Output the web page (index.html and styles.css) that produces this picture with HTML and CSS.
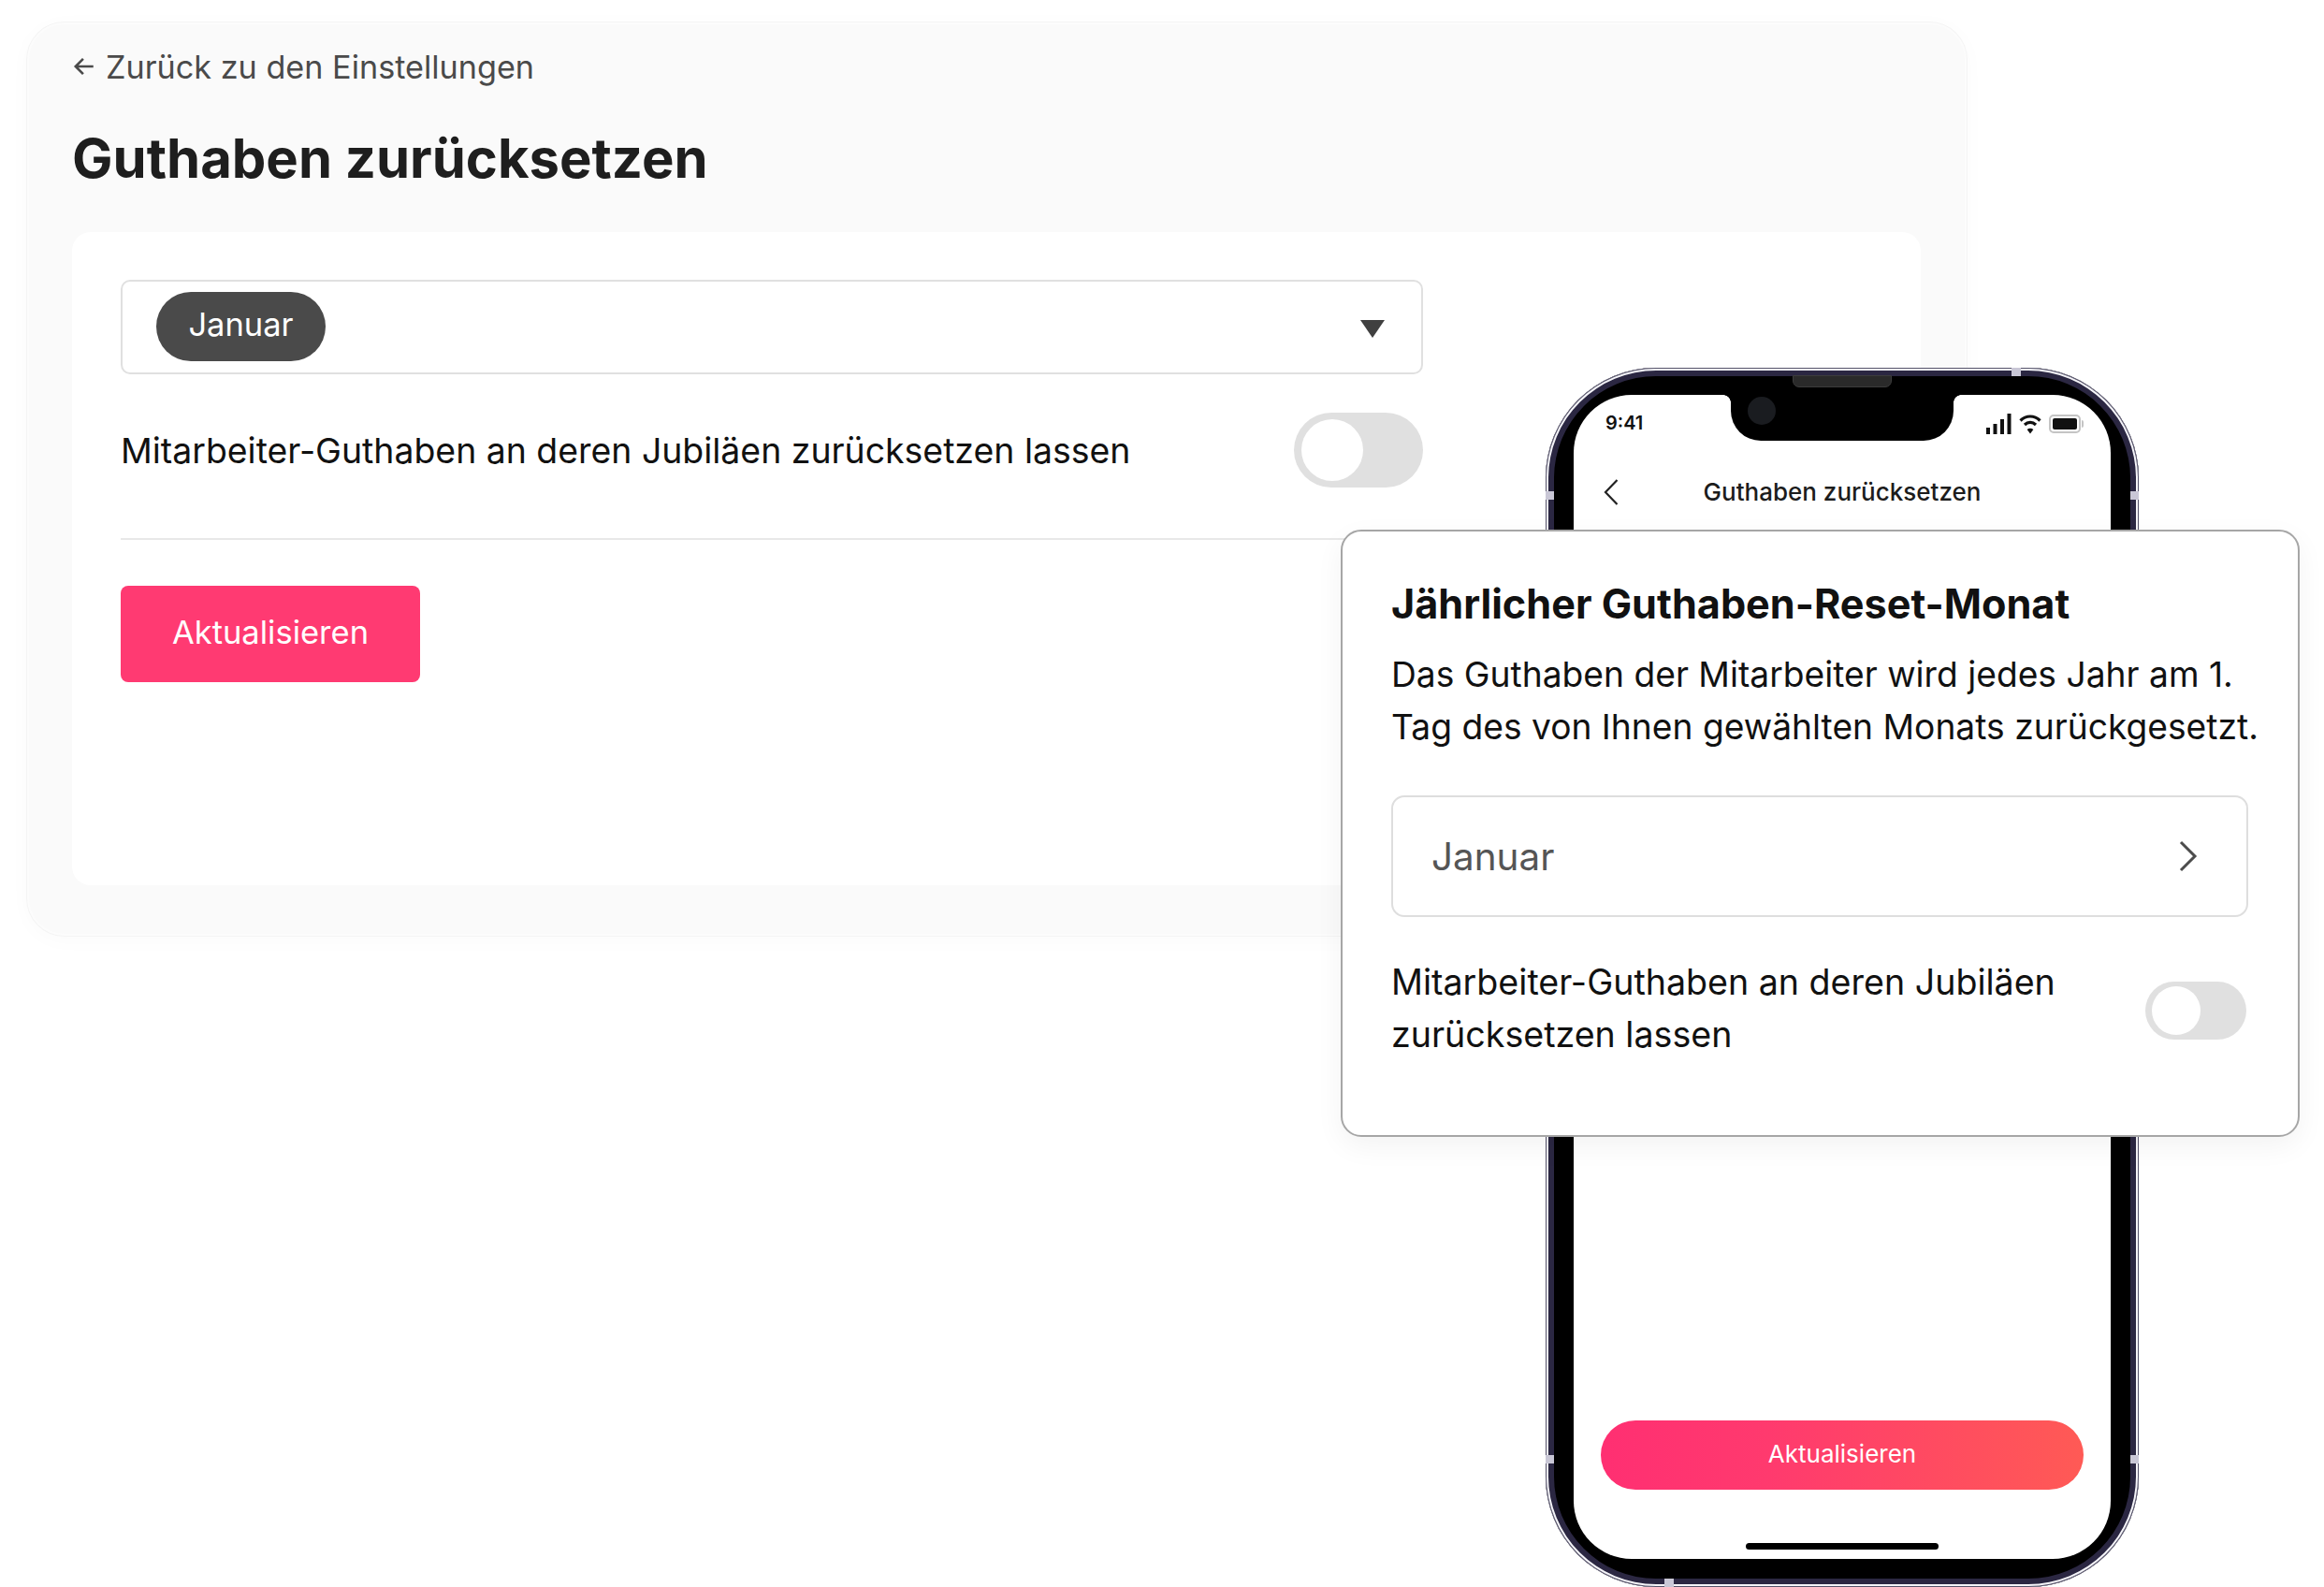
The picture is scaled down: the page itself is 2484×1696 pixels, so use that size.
FILE: index.html
```html
<!DOCTYPE html>
<html lang="de">
    <head>
        <title>Guthaben zurücksetzen</title>
        <meta charset="utf-8" />
        <link rel="stylesheet" href="styles.css">
    </head>
    <body>
        <div class="settings">
            <a class="back" href="#">
                <svg class="back-arrow" viewBox="0 0 24 24" width="26" height="26"><path d="M21 12H4M11 4.500 3.500 12 11 19.500" fill="none" stroke="#4a4a4a" stroke-width="2.400"/></svg>
                Zurück zu den Einstellungen
            </a>
            <h1>Guthaben zurücksetzen</h1>
            <div class="panel">
                <div class="form">
                    <div class="select">
                        <span class="chip">Januar</span>
                        <span class="caret"></span>
                    </div>
                    <div class="option">
                        <span>Mitarbeiter-Guthaben an deren Jubiläen zurücksetzen lassen</span>
                        <span class="toggle"><span class="knob"></span></span>
                    </div>
                </div>
                <div class="divider"></div>
                <button class="save" type="button">Aktualisieren</button>
            </div>
        </div>

        <div class="phone">
            <span class="band band-top"></span>
            <span class="band band-bottom"></span>
            <span class="band band-left1"></span>
            <span class="band band-left2"></span>
            <span class="band band-right1"></span>
            <span class="band band-right2"></span>
            <div class="speaker"></div>
            <div class="screen">
                <div class="notch"><span class="camera"></span></div>
                <div class="status">
                    <span class="time">9:41</span>
                    <span class="status-icons">
                        <svg viewBox="0 0 27 22" width="27" height="22"><path d="M0 15h4v7H0zM7.500 11h4v11h-4zM15 6h4v16h-4zM22.500 0h4v22h-4z" fill="#111"/></svg>
                        <svg viewBox="0 0 24 22" width="24" height="22"><path d="M1.500 7.500C7.500 1.500 16.500 1.500 22.500 7.500M6 12c3.500-3.400 8.500-3.400 12 0" fill="none" stroke="#111" stroke-width="3.200"/><path d="M12 21.500 8.600 17c2-1.800 4.800-1.800 6.800 0z" fill="#111"/></svg>
                        <span class="battery"><span class="battery-level"></span></span>
                    </span>
                </div>
                <div class="nav">
                    <svg class="nav-back" viewBox="0 0 16 28" width="16" height="28"><path d="M14.500 1 2 14l12.500 13" fill="none" stroke="#222" stroke-width="2.200"/></svg>
                    <span>Guthaben zurücksetzen</span>
                </div>
                <div class="screen-foot">
                    <button class="phone-save" type="button">Aktualisieren</button>
                    <div class="home"></div>
                </div>
            </div>
        </div>

        <div class="popup">
            <h2>Jährlicher Guthaben-Reset-Monat</h2>
            <p>Das Guthaben der Mitarbeiter wird jedes Jahr am 1. Tag des von Ihnen gewählten Monats zurückgesetzt.</p>
            <div class="month">
                <span>Januar</span>
                <svg viewBox="0 0 20 34" width="20" height="34"><path d="M2 2l15 15L2 32" fill="none" stroke="#4c4c4c" stroke-width="3"/></svg>
            </div>
            <div class="popup-option">
                <span class="popup-label">Mitarbeiter-Guthaben an deren Jubiläen zurücksetzen lassen</span>
                <span class="toggle toggle-small"><span class="knob"></span></span>
            </div>
        </div>
    </body>
</html>
```

FILE: styles.css
```css
html, body {
    margin: 0px;
    padding: 0px;
    background: white;
    font-family: Inter, "Liberation Sans", sans-serif;
    color: #111;
}
body {
    position: relative;
    width: 2484px;
    height: 1696px;
    padding: 24px 0px 0px 29px;
    box-sizing: border-box;
    overflow: hidden;
}
h1, h2, p {
    margin: 0px;
}

/* desktop card */
.settings {
    box-sizing: border-box;
    width: 2073px;
    height: 976px;
    padding: 25px 47px 0px 46px;
    border: 2px solid #fcfcfc;
    border-radius: 40px;
    background: #fafafa;
    box-shadow: 0px 0px 0px 1px #f4f4f4, 0px 4px 24px rgba(0, 0, 0, 0.025);
}
.back {
    display: flex;
    align-items: center;
    gap: 10px;
    height: 40px;
    color: #4a4a4a;
    font-size: 34.200px;
    text-decoration: none;
}
h1 {
    margin-top: 36px;
    height: 84px;
    color: #1e1e1e;
    font-size: 58px;
    font-weight: 700;
    line-height: 84px;
}
.panel {
    box-sizing: border-box;
    margin-top: 37px;
    height: 698px;
    padding: 51px 52px;
    border-radius: 20px;
    background: white;
}
.form {
    width: 1392px;
}
.select {
    display: flex;
    align-items: center;
    justify-content: space-between;
    box-sizing: border-box;
    height: 101px;
    padding: 0px 39px 2px 36px;
    border: 2px solid #e0e0e0;
    border-radius: 10px;
}
.chip {
    box-sizing: border-box;
    width: 181px;
    height: 74px;
    border-radius: 37px;
    background: #4a4a4a;
    color: white;
    font-size: 34.500px;
    line-height: 70px;
    text-align: center;
}
.caret {
    margin-top: 6px;
    width: 0px;
    height: 0px;
    border-top: 19px solid #404040;
    border-left: 13px solid transparent;
    border-right: 13px solid transparent;
}
.option {
    display: flex;
    align-items: center;
    justify-content: space-between;
    margin-top: 41px;
    font-size: 37.400px;
}
.toggle {
    display: block;
    flex: none;
    box-sizing: border-box;
    width: 138px;
    height: 80px;
    padding: 7px 8px;
    border-radius: 40px;
    background: #e0e0e0;
}
.knob {
    display: block;
    width: 66px;
    height: 66px;
    border-radius: 50%;
    background: white;
}
.toggle-small {
    margin-top: 5px;
    width: 108px;
    height: 62px;
    padding: 5px 7px;
    border-radius: 31px;
}
.toggle-small .knob {
    width: 52px;
    height: 52px;
}
.divider {
    margin-top: 54px;
    margin-right: -100px;
    height: 2px;
    background: #e8e8e8;
}
.save {
    display: block;
    margin-top: 49px;
    width: 320px;
    height: 103px;
    padding: 0px 0px 4px 0px;
    border: none;
    border-radius: 8px;
    background: #ff3a72;
    color: white;
    font-family: inherit;
    font-size: 34.500px;
}

/* phone mockup, lies over the card */
.phone {
    position: absolute;
    left: 1652px;
    top: 393px;
    box-sizing: border-box;
    width: 634px;
    height: 1303px;
    padding: 29px 30px 30px 30px;
    border-radius: 118px;
    background: black;
    box-shadow: inset 0px 0px 0px 1px #56536a, inset 0px 0px 0px 3px #f4f4f8, inset 0px 0px 0px 9px #2b2742;
}
.band {
    position: absolute;
    background: #c9c7d6;
}
.band-top {
    left: 498px;
    top: 0px;
    width: 10px;
    height: 9px;
}
.band-bottom {
    left: 127px;
    bottom: 0px;
    width: 10px;
    height: 9px;
}
.band-left1, .band-left2, .band-right1, .band-right2 {
    width: 9px;
    height: 9px;
}
.band-left1 {
    left: 0px;
    top: 132px;
}
.band-left2 {
    left: 0px;
    top: 1162px;
}
.band-right1 {
    right: 0px;
    top: 132px;
}
.band-right2 {
    right: 0px;
    top: 1162px;
}
.speaker {
    position: absolute;
    left: 264px;
    top: 8px;
    box-sizing: border-box;
    width: 106px;
    height: 13px;
    border: 1px solid #3c3c3c;
    border-radius: 0px 0px 7px 7px;
    background: #2a2a2a;
}
.screen {
    position: relative;
    display: flex;
    flex-direction: column;
    height: 1244px;
    border-radius: 62px;
    background: white;
}
.notch {
    position: absolute;
    left: 168px;
    top: 0px;
    width: 238px;
    height: 49px;
    border-radius: 0px 0px 32px 32px;
    background: black;
}
.notch::before, .notch::after {
    content: "";
    position: absolute;
    top: 0px;
    width: 8px;
    height: 8px;
}
.notch::before {
    left: -8px;
    background: radial-gradient(circle at 0px 8px, white 7.500px, black 8px);
}
.notch::after {
    right: -8px;
    background: radial-gradient(circle at 8px 8px, white 7.500px, black 8px);
}
.camera {
    position: absolute;
    left: 18px;
    top: 2px;
    width: 30px;
    height: 30px;
    border-radius: 50%;
    background: #1a1c20;
}
.status {
    display: flex;
    align-items: center;
    justify-content: space-between;
    height: 60px;
    padding: 0px 32px 0px 34px;
}
.time {
    font-size: 20px;
    font-weight: 600;
}
.status-icons {
    display: flex;
    align-items: center;
    gap: 8px;
    margin-top: 2px;
}
.battery {
    position: relative;
    box-sizing: border-box;
    width: 34px;
    height: 20px;
    padding: 2px;
    border: 2px solid #c4c4c4;
    border-radius: 5px;
}
.battery::after {
    content: "";
    position: absolute;
    right: -5px;
    top: 4px;
    width: 2px;
    height: 8px;
    border-radius: 0px 2px 2px 0px;
    background: #c4c4c4;
}
.battery-level {
    display: block;
    height: 12px;
    border-radius: 2px;
    background: #111;
}
.nav {
    position: relative;
    margin-top: 24px;
    height: 40px;
    color: #1c1c1c;
    font-size: 26px;
    font-weight: 500;
    line-height: 40px;
    text-align: center;
}
.nav-back {
    position: absolute;
    left: 32px;
    top: 6px;
}
.screen-foot {
    margin-top: auto;
    padding: 0px 29px 10px 29px;
}
.phone-save {
    display: block;
    width: 516px;
    height: 74px;
    padding: 0px 0px 3px 0px;
    border: none;
    border-radius: 37px;
    background: linear-gradient(90deg, #ff2f72, #ff3a6e 35%, #ff5a55);
    color: white;
    font-family: inherit;
    font-size: 26px;
}
.home {
    margin: 57px auto 0px;
    width: 206px;
    height: 7px;
    border-radius: 4px;
    background: black;
}

/* dialog, lies over the phone */
.popup {
    position: absolute;
    left: 1433px;
    top: 566px;
    box-sizing: border-box;
    width: 1025px;
    height: 649px;
    padding: 50px 20px 0px 52px;
    border: 2px solid #a6a6a6;
    border-radius: 22px;
    background: white;
    box-shadow: 0px 10px 30px rgba(0, 0, 0, 0.05);
}
h2 {
    font-size: 43.200px;
    font-weight: 700;
    line-height: 54px;
}
.popup p {
    margin-top: 21px;
    font-size: 37.200px;
    line-height: 55.500px;
}
.month {
    display: flex;
    align-items: center;
    justify-content: space-between;
    box-sizing: border-box;
    margin-top: 46px;
    width: 916px;
    height: 130px;
    padding: 0px 52px 0px 41px;
    border: 2px solid #dedede;
    border-radius: 14px;
    color: #555;
    font-size: 40.400px;
}
.popup-option {
    display: flex;
    align-items: center;
    justify-content: space-between;
    margin-top: 42px;
    width: 914px;
    font-size: 37.600px;
    line-height: 55.500px;
}
.popup-label {
    width: 760px;
}
```
